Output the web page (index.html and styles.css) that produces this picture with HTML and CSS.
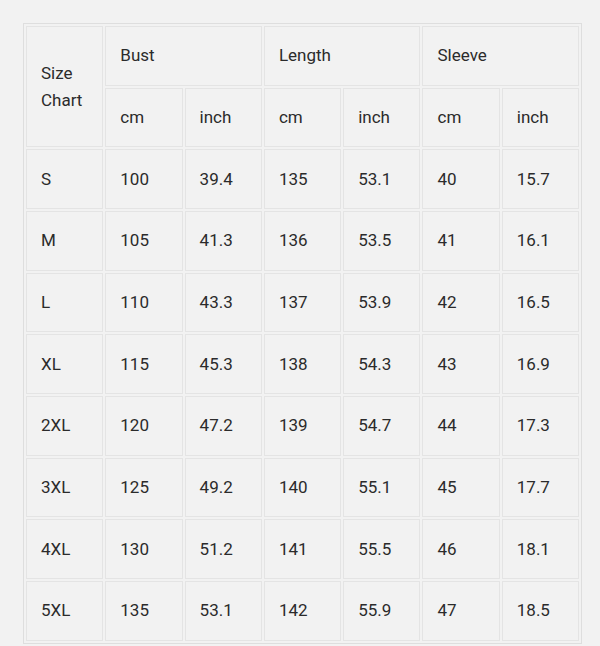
FILE: index.html
```html
<!DOCTYPE html>
<html>
<head>
<meta charset="utf-8">
<link rel="stylesheet" href="styles.css">
</head>
<body>
<div class="page">
<table class="chart">
<tr>
<th class="hd" rowspan="2">Size<br>Chart</th>
<th class="hd" colspan="2">Bust</th>
<th class="hd" colspan="2">Length</th>
<th class="hd" colspan="2">Sleeve</th>
</tr>
<tr><th>cm</th><th>inch</th><th>cm</th><th>inch</th><th>cm</th><th>inch</th></tr>
<tr><td>S</td><td>100</td><td>39.4</td><td>135</td><td>53.1</td><td>40</td><td>15.7</td></tr>
<tr><td>M</td><td>105</td><td>41.3</td><td>136</td><td>53.5</td><td>41</td><td>16.1</td></tr>
<tr><td>L</td><td>110</td><td>43.3</td><td>137</td><td>53.9</td><td>42</td><td>16.5</td></tr>
<tr><td>XL</td><td>115</td><td>45.3</td><td>138</td><td>54.3</td><td>43</td><td>16.9</td></tr>
<tr><td>2XL</td><td>120</td><td>47.2</td><td>139</td><td>54.7</td><td>44</td><td>17.3</td></tr>
<tr><td>3XL</td><td>125</td><td>49.2</td><td>140</td><td>55.1</td><td>45</td><td>17.7</td></tr>
<tr><td>4XL</td><td>130</td><td>51.2</td><td>141</td><td>55.5</td><td>46</td><td>18.1</td></tr>
<tr><td>5XL</td><td>135</td><td>53.1</td><td>142</td><td>55.9</td><td>47</td><td>18.5</td></tr>
</table>
<p class="note">Specifications:</p>
</div>
</body>
</html>
```
FILE: styles.css
```css
html, body {
  margin: 0;
  padding: 0;
  background: #f2f2f2;
}
.page {
  padding: 23px 0 0 23px;
  font-family: Roboto, "Liberation Sans", sans-serif;
  color: #2b2b2b;
}
.chart {
  border-collapse: separate;
  border-spacing: 2px;
  border: 1px solid #dedede;
  background: #f2f2f2;
}
.chart th, .chart td {
  box-sizing: border-box;
  width: 77.3px;
  height: 59.67px;
  padding: 0 0 0 14px;
  border: 1px solid #e4e4e4;
  text-align: left;
  vertical-align: middle;
  font-weight: 400;
  font-size: 17px;
  line-height: 27px;
  color: #2b2b2b;
}
.note {
  margin: 0;
  font-size: 17px;
  font-weight: 700;
  line-height: 20px;
  color: #111;
  padding-left: 2px;
}
```
